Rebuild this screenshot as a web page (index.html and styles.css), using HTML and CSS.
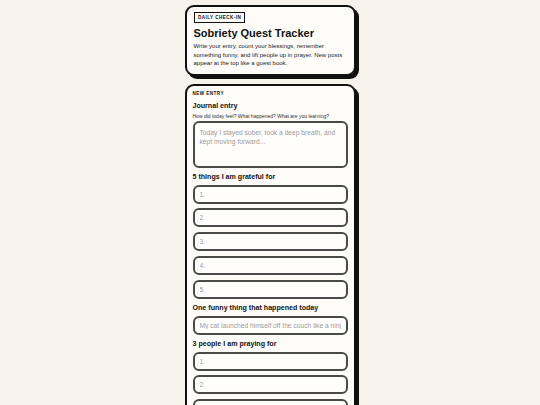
FILE: index.html
```html
<!DOCTYPE html>
<html lang="en">
<head>
<meta charset="utf-8">
<title>Sobriety Quest Tracker</title>
<link rel="stylesheet" href="styles.css">
</head>
<body>
<main class="page">
  <section class="card intro">
    <span class="badge">Daily check-in</span>
    <h1 class="title">Sobriety Quest Tracker</h1>
    <p class="lede">Write your entry, count your blessings, remember something funny, and lift people up in prayer. New posts appear at the top like a guest book.</p>
  </section>

  <section class="card entry">
    <h2 class="eyebrow">New entry</h2>

    <div class="field">
      <label class="label">Journal entry</label>
      <p class="hint">How did today feel? What happened? What are you learning?</p>
      <textarea class="box area" placeholder="Today I stayed sober, took a deep breath, and kept moving forward..."></textarea>
    </div>

    <div class="field">
      <label class="label">5 things I am grateful for</label>
      <div class="stack">
        <input class="box" placeholder="1.">
        <input class="box" placeholder="2.">
        <input class="box" placeholder="3.">
        <input class="box" placeholder="4.">
        <input class="box" placeholder="5.">
      </div>
    </div>

    <div class="field">
      <label class="label">One funny thing that happened today</label>
      <input class="box" placeholder="My cat launched himself off the couch like a ninja.">
    </div>

    <div class="field">
      <label class="label">3 people I am praying for</label>
      <div class="stack">
        <input class="box" placeholder="1.">
        <input class="box" placeholder="2.">
        <input class="box" placeholder="3.">
      </div>
    </div>
  </section>
</main>
</body>
</html>
```

FILE: styles.css
```css
* { box-sizing: border-box; }

html, body {
  margin: 0;
  padding: 0;
  background: #f6f3ec;
  font-family: "Liberation Sans", Arial, sans-serif;
  color: #111;
}

.page {
  width: 171px;
  margin: 5px auto 0;
  display: flex;
  flex-direction: column;
  gap: 8px;
}

.card {
  background: #fdfcf8;
  border: 2px solid #111;
  border-radius: 9px;
  box-shadow: 3px 3px 0 #111;
}

.intro {
  padding: 5px 7px 6px;
  display: flex;
  flex-direction: column;
  align-items: flex-start;
}

.badge {
  border: 1px solid #111;
  font-size: 4.6px;
  line-height: 5px;
  font-weight: 700;
  letter-spacing: 0.45px;
  text-transform: uppercase;
  padding: 2px 3px 2px 3.5px;
  height: 11px;
  display: flex;
  align-items: center;
}

.title {
  margin: 3.5px 0 0;
  font-size: 11px;
  line-height: 13px;
  font-weight: 700;
}

.lede {
  margin: 2.5px 0 0;
  font-size: 6px;
  line-height: 8.5px;
  color: #222;
}

.entry {
  padding: 5.5px 6px 20px;
}

.eyebrow {
  margin: 0;
  font-size: 4.6px;
  line-height: 6px;
  font-weight: 700;
  letter-spacing: 0.45px;
  text-transform: uppercase;
}

.field {
  display: flex;
  flex-direction: column;
  margin-top: 5.5px;
}

.field:first-of-type { margin-top: 5px; }

.label {
  font-size: 7.1px;
  line-height: 9px;
  font-weight: 700;
  margin-bottom: 2.5px;
}

.hint {
  margin: -1px 0 2px;
  font-size: 5px;
  line-height: 6px;
  color: #333;
}

.stack {
  display: flex;
  flex-direction: column;
  gap: 4.75px;
}

.box {
  display: block;
  width: 100%;
  height: 19px;
  margin: 0;
  border: 2px solid #4a4a4a;
  border-radius: 6px;
  background: #fffefc;
  font-family: "Liberation Sans", Arial, sans-serif;
  font-size: 6.7px;
  color: #111;
  padding: 0 5px;
  outline: none;
}

.box::placeholder { color: #9a9a9a; }

.area {
  height: 47px;
  padding: 5px 5px;
  line-height: 9px;
  resize: none;
}
```
